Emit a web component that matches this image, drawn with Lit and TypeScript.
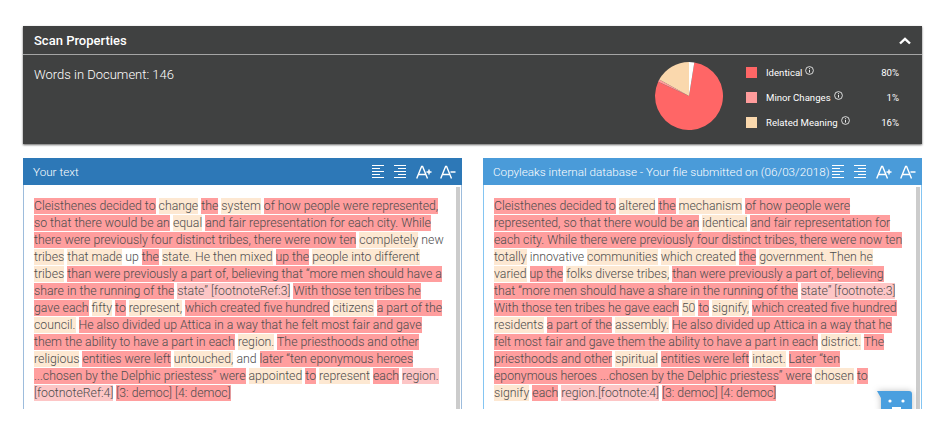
import { LitElement, html, css, svg } from "lit";
import { customElement } from "lit/decorators.js";

type Seg = [string, string];

const leftLines: Seg[][] = [
  [["r", "Cleisthenes decided to"], ["o", "change"], ["r", "the"], ["o", "system"], ["r", "of how people were represented,"]],
  [["r", "so that there would be an"], ["o", "equal"], ["r", "and fair representation for each city. While"]],
  [["r", "there were previously four distinct tribes, there were now ten"], ["o", "completely"], ["n", "new"]],
  [["o", "tribes"], ["o", "that made"], ["n", "up"], ["r", "the"], ["o", "state. He then mixed"], ["r", "up the"], ["o", "people into different"]],
  [["o", "tribes"], ["r", "than were previously a part of, believing that “more men should have a"]],
  [["r", "share in the running of the"], ["p", "state” [footnoteRef:3]"], ["r", "With those ten tribes he"]],
  [["r", "gave each"], ["o", "fifty"], ["r", "to"], ["o", "represent,"], ["r", "which created five hundred"], ["o", "citizens"], ["r", "a part of the"]],
  [["o", "council."], ["r", "He also divided up Attica in a way that he felt most fair and gave"]],
  [["r", "them the ability to have a part in each"], ["o", "region."], ["r", "The priesthoods and other"]],
  [["o", "religious"], ["r", "entities were left"], ["o", "untouched,"], ["n", "and"], ["r", "later “ten eponymous heroes"]],
  [["r", "...chosen by the Delphic priestess” were"], ["o", "appointed"], ["r", "to"], ["o", "represent"], ["r", "each"], ["p", "region."]],
  [["p", "[footnoteRef:4]"], ["r", "[3: democ] [4: democ]"]],
];

const rightLines: Seg[][] = [
  [["r", "Cleisthenes decided to"], ["o", "altered"], ["r", "the"], ["o", "mechanism"], ["r", "of how people were"]],
  [["r", "represented, so that there would be an"], ["o", "identical"], ["r", "and fair representation for"]],
  [["r", "each city. While there were previously four distinct tribes, there were now ten"]],
  [["o", "totally"], ["n", "innovative"], ["o", "communities"], ["o", "which created"], ["r", "the"], ["o", "government. Then he"]],
  [["o", "varied"], ["r", "up the"], ["o", "folks diverse tribes,"], ["r", "than were previously a part of, believing"]],
  [["r", "that “more men should have a share in the running of the"], ["p", "state” [footnote:3]"]],
  [["r", "With those ten tribes he gave each"], ["o", "50"], ["r", "to"], ["o", "signify,"], ["r", "which created five hundred"]],
  [["o", "residents"], ["r", "a part of the"], ["o", "assembly."], ["r", "He also divided up Attica in a way that he"]],
  [["r", "felt most fair and gave them the ability to have a part in each"], ["o", "district."], ["r", "The"]],
  [["r", "priesthoods and other"], ["o", "spiritual"], ["r", "entities were left"], ["o", "intact."], ["r", "Later “ten"]],
  [["r", "eponymous heroes ...chosen by the Delphic priestess” were"], ["o", "chosen"], ["r", "to"]],
  [["o", "signify"], ["r", "each"], ["p", "region.[footnote:4]"], ["r", "[3: democ] [4: democ]"]],
];

const legend = [
  { label: "Identical", value: "80%", cls: "s-red" },
  { label: "Minor Changes", value: "1%", cls: "s-pink" },
  { label: "Related Meaning", value: "16%", cls: "s-peach" },
];

function wedge(a0: number, a1: number, fill: string) {
  const r = 34;
  const pt = (a: number) => {
    const t = (a * Math.PI) / 180;
    return `${(34 + r * Math.sin(t)).toFixed(2)} ${(34 - r * Math.cos(t)).toFixed(2)}`;
  };
  const large = a1 - a0 > 180 ? 1 : 0;
  return svg`<path d="M34 34L${pt(a0)}A${r} ${r} 0 ${large} 1 ${pt(a1)}Z" fill=${fill}></path>`;
}

const infoIcon = html`<svg class="info" viewBox="0 0 9 9" width="9" height="9">
  <circle cx="4.5" cy="4.5" r="3.9" fill="none" stroke="#fff" stroke-width=".8"></circle>
  <path d="M4.5 3.9V6.6M4.5 2.2V3.1" stroke="#fff" stroke-width=".9"></path>
</svg>`;

const alignLeft = html`<svg viewBox="0 0 12 14" width="12" height="14">
  <path d="M0 .5H12M0 3.5H8M0 6.5H12M0 9.5H8M0 12.5H12" stroke="#fff" stroke-width="1"></path>
</svg>`;
const alignRight = html`<svg viewBox="0 0 12 14" width="12" height="14">
  <path d="M0 .5H12M4 3.5H12M0 6.5H12M4 9.5H12M0 12.5H12" stroke="#fff" stroke-width="1"></path>
</svg>`;
const fontUp = html`<svg viewBox="0 0 16 14" width="16" height="14">
  <path d="M.7 13.5L5.6 1.5H6.6L11.5 13.5M2.6 9.5H9.6" fill="none" stroke="#fff" stroke-width="1.4"></path>
  <path d="M10.5 7H15.5M13 4.5V9.5" stroke="#fff" stroke-width="1.5"></path>
</svg>`;
const fontDown = html`<svg class="last" viewBox="0 0 16 14" width="16" height="14">
  <path d="M.7 13.5L5.6 1.5H6.6L11.5 13.5M2.6 9.5H9.6" fill="none" stroke="#fff" stroke-width="1.4"></path>
  <path d="M10.5 7H15.5" stroke="#fff" stroke-width="1.5"></path>
</svg>`;

@customElement("app-root")
export class AppRoot extends LitElement {
  static styles = css`
    :host {
      display: block;
      width: 950px;
      height: 432px;
      overflow: hidden;
      background: #fff;
      box-sizing: border-box;
      padding: 26px 28px 0 23px;
      font-family: Roboto, "Liberation Sans", sans-serif;
    }
    .props {
      height: 118px;
      background: #404141;
      color: #fff;
      box-shadow: 0 1px 2px rgba(0, 0, 0, 0.6);
      display: flex;
      flex-direction: column;
    }
    .props-head {
      height: 29px;
      flex: none;
      box-sizing: border-box;
      border-bottom: 1px solid #a5a5a5;
      padding: 1px 11px 0;
      display: flex;
      align-items: center;
      justify-content: space-between;
      font-size: 13px;
      font-weight: 500;
    }
    .props-body {
      flex: 1;
      display: flex;
      padding: 0 23px 0 11px;
    }
    .words {
      flex: 1;
      padding-top: 12px;
      font-size: 13px;
      font-weight: 300;
      line-height: 16px;
    }
    .pie {
      flex: none;
      margin: 7px 23px 0 0;
    }
    .legend {
      flex: none;
      width: 153px;
      padding-top: 9px;
      display: flex;
      flex-direction: column;
      gap: 9px;
    }
    .row {
      display: flex;
      align-items: center;
      height: 16px;
      font-size: 9.6px;
    }
    .sw {
      width: 11px;
      height: 11px;
      margin-right: 9px;
      flex: none;
    }
    .s-red { background: #ff6666; }
    .s-pink { background: #ff9c9c; }
    .s-peach { background: #fad8ad; }
    .info { margin: -3px 0 0 3px; }
    .label { flex: 1; display: flex; align-items: center; white-space: nowrap; }
    .cards {
      margin-top: 14px;
      display: grid;
      grid-template-columns: 439px 439px;
      column-gap: 21px;
    }
    .card {
      height: 251px;
      display: flex;
      flex-direction: column;
    }
    .card-head {
      height: 27px;
      flex: none;
      box-sizing: border-box;
      display: flex;
      align-items: center;
      color: #fff;
      font-size: 11.7px;
      font-weight: 300;
      padding: 1px 6px 0 10px;
      white-space: nowrap;
    }
    .left .card-head { background: #2d78b7; }
    .right .card-head { background: #4a9bd9; }
    .title { flex: 1; }
    .tools { display: flex; align-items: center; gap: 10px; }
    .tools svg { display: block; }
    .tools .last { margin-left: -2px; }
    .card-body {
      flex: 1;
      min-height: 0;
      position: relative;
      overflow: hidden;
      display: flex;
      box-sizing: border-box;
      border-left: 1px solid;
      border-right: 1px solid;
    }
    .left .card-body { border-color: #9dbcdc; }
    .right .card-body { border-color: #84c5f2; }
    .doc {
      flex: 1;
      min-width: 0;
      padding: 13px 0 0 10px;
      font-size: 12.3px;
      font-weight: 300;
      line-height: 17px;
      color: #4d4d4d;
      white-space: nowrap;
    }
    .line { height: 17px; }
    .bar {
      flex: none;
      width: 4px;
      margin: 2px 1px 0 0;
      background: #cccccc;
    }
    .r { background: #ff9e9e; padding: 1px 0; }
    .p { background: #fdc6c6; padding: 1px 0; }
    .o { background: #fde8d2; padding: 1px 0; }
    .bubble {
      position: absolute;
      left: 393px;
      top: 206px;
      filter: drop-shadow(0 0 3px rgba(0, 0, 0, 0.25));
    }
    .bubble svg { display: block; }
  `;

  private doc(lines: Seg[][]) {
    return html`<div class="doc">
      ${lines.map(
        (segs) => html`<div class="line">${segs.map(
          ([k, t], i) => html`${i ? " " : ""}<span class=${k}>${t}</span>`
        )}</div>`
      )}
    </div>`;
  }

  private tools() {
    return html`<div class="tools">${alignLeft}${alignRight}${fontUp}${fontDown}</div>`;
  }

  render() {
    return html`
      <section class="props">
        <div class="props-head">
          <span>Scan Properties</span>
          <svg viewBox="0 0 12 8" width="12" height="8">
            <path d="M1 6.5L6 1.8L11 6.5" fill="none" stroke="#fff" stroke-width="2.4"></path>
          </svg>
        </div>
        <div class="props-body">
          <div class="words">Words in Document: 146</div>
          <svg class="pie" viewBox="0 0 68 68" width="68" height="68">
            ${wedge(9, 295, "#ff6666")}
            ${wedge(295, 299, "#ff9c9c")}
            ${wedge(299, 360, "#fad8ad")}
            ${wedge(0, 9, "#ffffff")}
          </svg>
          <div class="legend">
            ${legend.map(
              (l) => html`<div class="row">
                <span class="sw ${l.cls}"></span>
                <span class="label">${l.label}${infoIcon}</span>
                <span>${l.value}</span>
              </div>`
            )}
          </div>
        </div>
      </section>
      <div class="cards">
        <section class="card left">
          <div class="card-head"><span class="title">Your text</span>${this.tools()}</div>
          <div class="card-body">${this.doc(leftLines)}<div class="bar"></div></div>
        </section>
        <section class="card right">
          <div class="card-head">
            <span class="title">Copyleaks internal database - Your file submitted on (06/03/2018)</span>${this.tools()}
          </div>
          <div class="card-body">
            ${this.doc(rightLines)}<div class="bar"></div>
            <div class="bubble">
              <svg viewBox="0 0 36 22" width="36" height="22">
                <path d="M0 0H32Q35 0 35 3V22H4V7Z" fill="#4a9fdf"></path>
                <circle cx="13" cy="10" r="1.6" fill="#fff"></circle>
                <circle cx="26" cy="10" r="1.6" fill="#fff"></circle>
                <rect x="15" y="16" width="9" height="6" fill="#fff"></rect>
              </svg>
            </div>
          </div>
        </section>
      </div>
    `;
  }
}
